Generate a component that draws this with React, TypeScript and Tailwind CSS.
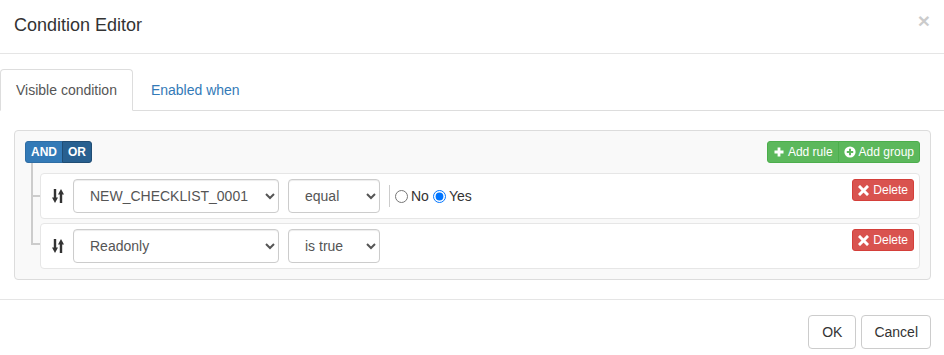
import React from "react";

function SortIcon() {
  return (
    <svg width="12" height="14" viewBox="0 0 12 14" className="block">
      <path d="M1.8 0h2.4v8.5h1.8l-3 5.5l-3-5.5h1.8z" fill="#333" />
      <path d="M10.2 14h-2.4v-8.5h-1.8l3-5.5l3 5.5h-1.8z" fill="#333" />
    </svg>
  );
}

function PlusIcon() {
  return (
    <svg width="12" height="12" viewBox="0 0 12 12" className="block">
      <path d="M4.6 1.5h2.8v3.1h3.1v2.8h-3.1v3.1h-2.8v-3.1h-3.1v-2.8h3.1z" fill="#fff" />
    </svg>
  );
}

function PlusCircleIcon() {
  return (
    <svg width="12" height="12" viewBox="0 0 12 12" className="block">
      <circle cx="6" cy="6" r="5.6" fill="#fff" />
      <path d="M5 2.8h2v2.2h2.2v2h-2.2v2.2h-2v-2.2h-2.2v-2h2.2z" fill="#5cb85c" />
    </svg>
  );
}

function RemoveIcon() {
  return (
    <svg width="11" height="11" viewBox="0 0 11 11" className="block">
      <path d="M2 2L9 9M9 2L2 9" stroke="#fff" strokeWidth="3" strokeLinecap="square" />
    </svg>
  );
}

function DeleteButton() {
  return (
    <button className="ml-auto self-start flex items-center gap-[4px] h-[22px] px-[5px] bg-[#d9534f] border border-[#d43f3a] rounded-[3px] text-white text-[12px] leading-[18px]">
      <RemoveIcon />
      Delete
    </button>
  );
}

function Select({ value, width }: { value: string; width: string }) {
  return (
    <select
      defaultValue={value}
      className={`${width} h-[34px] border border-[#ccc] rounded-[4px] bg-white px-[12px] text-[14px] text-[#555] shadow-[inset_0_1px_1px_rgba(0,0,0,0.075)] font-['Liberation_Sans',Arial,sans-serif]`}
    >
      <option value={value}>{value}</option>
    </select>
  );
}

function Rule({
  field,
  op,
  radios,
  connector,
}: {
  field: string;
  op: string;
  radios?: boolean;
  connector: string;
}) {
  return (
    <div className="relative flex items-center bg-white border border-[#e6e6e6] rounded-[4px] p-[5px]">
      <div className={`absolute left-[-10px] w-[9px] border-l-2 border-b-2 border-[#ccc] ${connector}`} />
      <span className="w-[27px] flex pl-[6px]">
        <SortIcon />
      </span>
      <Select value={field} width="w-[206px]" />
      <span className="ml-[9px]">
        <Select value={op} width="w-[92px]" />
      </span>
      {radios && (
        <div className="flex items-center ml-[9px]">
          <span className="w-px h-[22px] bg-[#ccc]" />
          <label className="flex items-center text-[#333]">
            <input type="radio" name="r1" className="w-[13px] h-[13px] ml-[5px] mr-[3px]" />
            No
          </label>
          <label className="flex items-center text-[#333]">
            <input type="radio" name="r1" defaultChecked className="w-[13px] h-[13px] ml-[4px] mr-[3px]" />
            Yes
          </label>
        </div>
      )}
      <DeleteButton />
    </div>
  );
}

export default function App() {
  return (
    <div className="w-[944px] h-[355px] overflow-hidden bg-white font-['Liberation_Sans',Arial,sans-serif] text-[14px] leading-[20px] text-[#333]">
      {/* header */}
      <div className="h-[54px] border-b border-[#e5e5e5] flex items-start justify-between pl-[14px] pr-[13px]">
        <h4 className="pt-[15px] text-[18px] leading-[20px] text-[#333]">Condition Editor</h4>
        <button className="mt-[10px] mr-[1px] text-[21px] font-bold leading-[21px] text-black opacity-20">×</button>
      </div>

      {/* body */}
      <div className="pt-[15px]">
        <div className="flex h-[42px] border-b border-[#ddd]">
          <div className="h-[42px] -mb-px px-[15px] py-[10px] border border-[#ddd] border-b-white rounded-t-[4px] text-[#555] bg-white">
            Visible condition
          </div>
          <div className="ml-[2px] px-[15px] py-[10px] border border-transparent text-[#337ab7]">Enabled when</div>
        </div>

        <div className="ml-[14px] mr-[13px] mt-[19px] border border-[#dcdcdc] bg-[#f9f9f9] rounded-[4px] p-[10px]">
          <div className="flex justify-between h-[22px]">
            <div className="flex text-[12px] font-bold text-white leading-[18px]">
              <button className="px-[5px] h-[22px] bg-[#337ab7] border border-[#2e6da4] rounded-l-[3px]">AND</button>
              <button className="-ml-px px-[5px] h-[22px] bg-[#286090] border border-[#204d74] rounded-r-[3px]">OR</button>
            </div>
            <div className="flex text-[12px] text-white leading-[18px]">
              <button className="flex items-center gap-[3px] h-[22px] px-[5px] bg-[#5cb85c] border border-[#4cae4c] rounded-l-[3px]">
                <PlusIcon />
                Add rule
              </button>
              <button className="-ml-px flex items-center gap-[3px] h-[22px] px-[5px] bg-[#5cb85c] border border-[#4cae4c] rounded-r-[3px]">
                <PlusCircleIcon />
                Add group
              </button>
            </div>
          </div>

          <div className="mt-[10px] pl-[15px] flex flex-col gap-[4px]">
            <Rule field="NEW_CHECKLIST_0001" op="equal" radios connector="top-[-11px] h-[34px]" />
            <Rule field="Readonly" op="is true" connector="top-[-29px] h-[50px]" />
          </div>
        </div>
      </div>

      {/* footer */}
      <div className="mt-[19px] border-t border-[#e5e5e5] pt-[15px] pr-[13px] flex justify-end gap-[5px]">
        <button className="h-[34px] px-[13px] border border-[#ccc] rounded-[4px] bg-white text-[#333]">OK</button>
        <button className="h-[34px] px-[12px] border border-[#ccc] rounded-[4px] bg-white text-[#333]">Cancel</button>
      </div>
    </div>
  );
}
